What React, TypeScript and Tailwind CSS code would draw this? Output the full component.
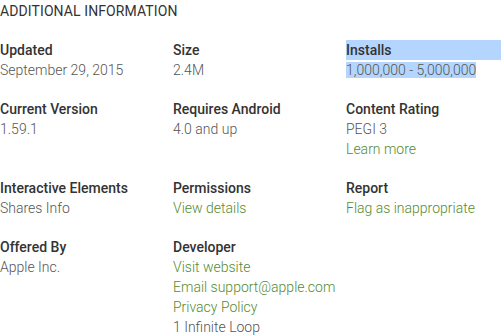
const link = "text-[#558b2f]";

type Cell = { label: string; lines: { text: string; link?: boolean }[]; selected?: boolean };

const rows: Cell[][] = [
  [
    { label: "Updated", lines: [{ text: "September 29, 2015" }] },
    { label: "Size", lines: [{ text: "2.4M" }] },
    { label: "Installs", lines: [{ text: "1,000,000 - 5,000,000" }], selected: true },
  ],
  [
    { label: "Current Version", lines: [{ text: "1.59.1" }] },
    { label: "Requires Android", lines: [{ text: "4.0 and up" }] },
    { label: "Content Rating", lines: [{ text: "PEGI 3" }, { text: "Learn more", link: true }] },
  ],
  [
    { label: "Interactive Elements", lines: [{ text: "Shares Info" }] },
    { label: "Permissions", lines: [{ text: "View details", link: true }] },
    { label: "Report", lines: [{ text: "Flag as inappropriate", link: true }] },
  ],
  [
    { label: "Offered By", lines: [{ text: "Apple Inc." }] },
    {
      label: "Developer",
      lines: [
        { text: "Visit website", link: true },
        { text: "Email support@apple.com", link: true },
        { text: "Privacy Policy", link: true },
        { text: "1 Infinite Loop" },
      ],
    },
    { label: "", lines: [] },
  ],
];

export default function App() {
  return (
    <div className="w-[504px] h-[336px] overflow-hidden bg-white font-['Roboto',sans-serif] text-[14px] leading-[20px]">
      <h2 className="pt-[1px] text-[14px] leading-[20px] font-normal text-[#333] tracking-[0.1px]">ADDITIONAL INFORMATION</h2>
      <div className="mt-[19px] grid grid-cols-[173px_173px_158px] gap-y-[19px]">
        {rows.flat().map((c, i) => (
          <div key={i}>
            {c.label && (
              <div className={c.selected ? "bg-[#b4d5fe] w-[155px]" : ""}>
                <span className="font-medium text-[#333]">{c.label}</span>
              </div>
            )}
            {c.lines.map((l, j) => (
              <div key={j} className={l.link ? `${link} font-light` : "font-light text-[#555]"}>
                {c.selected ? <span className="bg-[#b4d5fe]">{l.text}</span> : l.text}
              </div>
            ))}
          </div>
        ))}
      </div>
    </div>
  );
}
